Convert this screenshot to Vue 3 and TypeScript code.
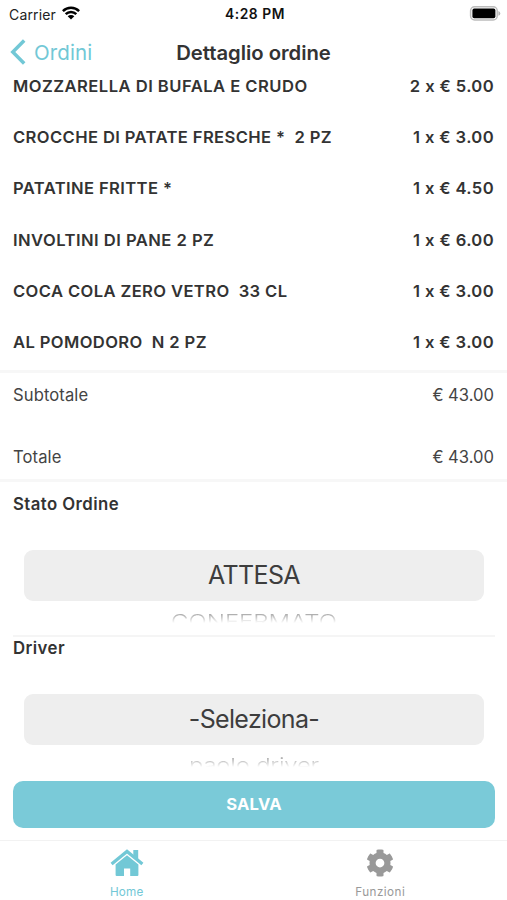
<script setup lang="ts">
interface OrderLine {
  name: string
  price: string
  wide?: boolean
}

interface Picker {
  id: string
  title: string
  selected: string
  next: string
}

const lines: OrderLine[] = [
  { name: 'MOZZARELLA DI BUFALA E CRUDO', price: '2 x € 5.00', wide: true },
  { name: 'CROCCHE DI PATATE FRESCHE *  2 PZ', price: '1 x € 3.00' },
  { name: 'PATATINE FRITTE *', price: '1 x € 4.50' },
  { name: 'INVOLTINI DI PANE 2 PZ', price: '1 x € 6.00', wide: true },
  { name: 'COCA COLA ZERO VETRO  33 CL', price: '1 x € 3.00' },
  { name: 'AL POMODORO  N 2 PZ', price: '1 x € 3.00' },
]

const totals = [
  { label: 'Subtotale', value: '€ 43.00' },
  { label: 'Totale', value: '€ 43.00' },
]

const pickers: Picker[] = [
  { id: 'stato', title: 'Stato Ordine', selected: 'ATTESA', next: 'CONFERMATO' },
  { id: 'driver', title: 'Driver', selected: '-Seleziona-', next: 'paolo driver' },
]
</script>

<template>
  <div class="screen">
    <div class="status">
      <div class="carrier">
        <span>Carrier</span>
        <svg class="wifi" width="18" height="14" viewBox="0 0 18 14">
          <g fill="none" stroke="#000" stroke-width="2.5">
            <path d="M0.9 5.1 A11.6 11.6 0 0 1 17.1 5.1" />
            <path d="M3.7 8.2 A7.5 7.5 0 0 1 14.3 8.2" />
          </g>
          <path d="M9 13.6 L5.7 10.3 A4.7 4.7 0 0 1 12.3 10.3 Z" fill="#000" />
        </svg>
      </div>
      <span class="time">4:28 PM</span>
      <svg class="battery" width="32" height="15" viewBox="0 0 32 15">
        <rect x="1.6" y="0.8" width="26.6" height="13.2" rx="4" fill="#fff" stroke="#bcbcbc" stroke-width="1.5" />
        <rect x="3.4" y="2.6" width="23" height="9.6" rx="1.8" fill="#000" />
        <path d="M29.400 5 Q31.300 5.8 31.300 7.4 Q31.300 9 29.400 9.8 Z" fill="#b4b4b4" />
      </svg>
    </div>

    <header class="nav">
      <div class="back">
        <svg width="16" height="26" viewBox="0 0 16 26">
          <path d="M14.200 1.4 L2.8 13 L14.200 24.6" fill="none" stroke="#72c8d6" stroke-width="3.500" />
        </svg>
        <span>Ordini</span>
      </div>
      <h1>Dettaglio ordine</h1>
      <div></div>
    </header>

    <main class="content">
      <section class="lines">
        <div v-for="line in lines" :key="line.name" class="line">
          <span class="name" :class="{ wide: line.wide }">{{ line.name }}</span>
          <span class="price">{{ line.price }}</span>
        </div>
      </section>

      <section class="totals">
        <div v-for="t in totals" :key="t.label" class="total">
          <span>{{ t.label }}</span>
          <span class="amount">{{ t.value }}</span>
        </div>
      </section>

      <section v-for="p in pickers" :key="p.id" class="picker" :class="p.id">
        <h2>{{ p.title }}</h2>
        <div class="wheel">
          <div class="selected"><span>{{ p.selected }}</span></div>
          <div class="next"><span>{{ p.next }}</span></div>
        </div>
      </section>

      <button class="save"><span>SALVA</span></button>
    </main>

    <nav class="tabs">
      <div class="tab active">
        <svg width="34" height="28" viewBox="0 0 34 28">
          <path d="M1.6 15 L17 2.4 L32.4 15" fill="none" stroke="currentColor" stroke-width="3.2" />
          <path d="M23.300 1 H28.200 V11.500 L23.300 7.500 Z" fill="currentColor" />
          <path d="M5.600 15.600 L17 6.200 L28.400 15.600 V26 Q28.400 27 27.400 27 H20.200 V19.600 H14 V27 H6.600 Q5.600 27 5.600 26 Z" fill="currentColor" />
        </svg>
        <span>Home</span>
      </div>
      <div class="tab functions">
        <svg width="30" height="30" viewBox="0 0 512 512">
          <path fill="currentColor" d="M487.400 315.700l-42.600-24.600c4.300-23.200 4.300-47 0-70.200l42.600-24.600c4.900-2.800 7.100-8.600 5.500-14-11.100-35.600-30-67.800-54.700-94.600-3.800-4.100-10-5.100-14.800-2.300L380.800 110c-17.900-15.400-38.500-27.300-60.800-35.100V25.800c0-5.600-3.900-10.500-9.400-11.700-36.700-8.200-74.300-7.800-109.200 0-5.500 1.200-9.400 6.100-9.400 11.700V75c-22.200 7.900-42.800 19.800-60.800 35.100L88.700 85.500c-4.900-2.800-11-1.900-14.800 2.300-24.700 26.700-43.600 58.900-54.700 94.600-1.700 5.400.6 11.200 5.500 14L67.300 221c-4.300 23.200-4.300 47 0 70.200l-42.600 24.600c-4.900 2.800-7.100 8.600-5.500 14 11.100 35.600 30 67.800 54.700 94.600 3.800 4.100 10 5.100 14.800 2.300l42.600-24.600c17.900 15.400 38.500 27.300 60.800 35.100v49.200c0 5.600 3.900 10.500 9.400 11.700 36.700 8.200 74.300 7.800 109.200 0 5.500-1.200 9.400-6.100 9.400-11.700v-49.200c22.200-7.900 42.800-19.800 60.800-35.100l42.600 24.600c4.900 2.800 11 1.900 14.800-2.300 24.700-26.700 43.600-58.900 54.700-94.600 1.500-5.500-.7-11.300-5.600-14.100zM256 336c-44.100 0-80-35.900-80-80s35.900-80 80-80 80 35.900 80 80-35.900 80-80 80z" />
        </svg>
        <span>Funzioni</span>
      </div>
    </nav>
  </div>
</template>

<style>
body {
  margin: 0;
  background: #fff;
}
</style>

<style scoped>
.screen {
  width: 100%;
  height: 900px;
  display: flex;
  flex-direction: column;
  overflow: hidden;
  background: #fff;
  color: #333;
  font-family: Inter, "Liberation Sans", sans-serif;
  box-sizing: border-box;
}
.status {
  height: 28px;
  flex: none;
  display: grid;
  grid-template-columns: 1fr auto 1fr;
  align-items: center;
  padding: 0 6px 0 9px;
  color: #222;
}
.carrier {
  display: flex;
  align-items: center;
  gap: 6px;
  font-size: 14px;
  letter-spacing: 0.15px;
}
.wifi {
  margin-top: -2px;
}
.time {
  font-size: 13.8px;
  font-weight: 600;
  color: #111;
  letter-spacing: 0.55px;
}
.battery {
  justify-self: end;
  margin-top: -1px;
}
.nav {
  height: 48px;
  flex: none;
  display: grid;
  grid-template-columns: 1fr auto 1fr;
  align-items: center;
  padding: 0 10px;
}
.back {
  display: flex;
  align-items: center;
  gap: 8px;
  color: #72c8d6;
  font-size: 20.5px;
  letter-spacing: 0.1px;
}
h1 {
  margin: 0;
  font-size: 20.3px;
  font-weight: 600;
  letter-spacing: -0.03px;
}
.content {
  flex: 1;
  min-height: 0;
  display: flex;
  flex-direction: column;
}
.lines {
  height: 294px;
  flex: none;
  overflow: hidden;
  display: flex;
  flex-direction: column;
  justify-content: flex-end;
  padding-bottom: 2.3px;
  box-sizing: border-box;
}
.line {
  height: 51.25px;
  flex: none;
  display: flex;
  justify-content: space-between;
  align-items: center;
  padding: 0 13px;
  font-size: 16.6px;
  font-weight: 600;
  letter-spacing: 0.38px;
  white-space: pre;
}
.name.wide {
  letter-spacing: 0.46px;
}
.totals {
  flex: none;
  height: 112px;
  box-sizing: border-box;
  border-top: 3px solid #f7f7f7;
  border-bottom: 3px solid #f7f7f7;
  display: flex;
  flex-direction: column;
  justify-content: space-between;
  padding: 11px 13px 11px;
  font-size: 16.6px;
  letter-spacing: 0.1px;
  color: #444;
}
.total {
  height: 22px;
  display: flex;
  justify-content: space-between;
  align-items: center;
}
.amount {
  letter-spacing: 0;
}
.picker {
  flex: none;
  margin: 0 12px 0 13px;
  box-sizing: border-box;
}
.stato {
  height: 155px;
  border-bottom: 2px solid #f5f5f5;
  padding-top: 11px;
}
.driver {
  height: 143px;
}
h2 {
  margin: 0;
  height: 22px;
  line-height: 22px;
  font-size: 16.8px;
  font-weight: 600;
  letter-spacing: 0.42px;
}
.wheel {
  margin: 34.5px 11px 0;
  height: 75px;
  overflow: hidden;
}
.selected {
  height: 51.5px;
  border-radius: 9px;
  background: #eee;
  display: flex;
  align-items: center;
  justify-content: center;
  font-size: 25px;
  letter-spacing: -0.65px;
  color: #3d3d3d;
}
.next {
  height: 22px;
  overflow: hidden;
  display: flex;
  justify-content: center;
  font-size: 24px;
  font-weight: 300;
  line-height: 30px;
  color: #999;
  -webkit-mask-image: linear-gradient(#000 50%, transparent 100%);
  mask-image: linear-gradient(#000 50%, transparent 100%);
}
.next span {
  height: 30px;
  margin-top: 5.5px;
  transform: scaleY(0.8);
}
.driver .next {
  letter-spacing: -0.25px;
}
.save {
  flex: none;
  height: 47.5px;
  margin: 0.5px 12px 0 13px;
  padding: 0;
  border: 0;
  border-radius: 10px;
  background: #7acad8;
  color: #fff;
  font-family: inherit;
  font-size: 16.6px;
  font-weight: 700;
  letter-spacing: 0.2px;
}
.tabs {
  flex: none;
  height: 60px;
  box-sizing: border-box;
  border-top: 1px solid #f2f2f2;
  display: grid;
  grid-template-columns: 1fr 1fr;
}
.tab {
  display: flex;
  flex-direction: column;
  align-items: center;
  color: #999;
  font-size: 11.7px;
  letter-spacing: 0.2px;
}
.tab.functions {
  letter-spacing: 0.45px;
}
.tab svg {
  height: 28px;
  margin-top: 7.5px;
}
.tab span {
  margin-top: 8.5px;
  line-height: 15px;
}
.tab.active {
  color: #72c8d6;
}
</style>
